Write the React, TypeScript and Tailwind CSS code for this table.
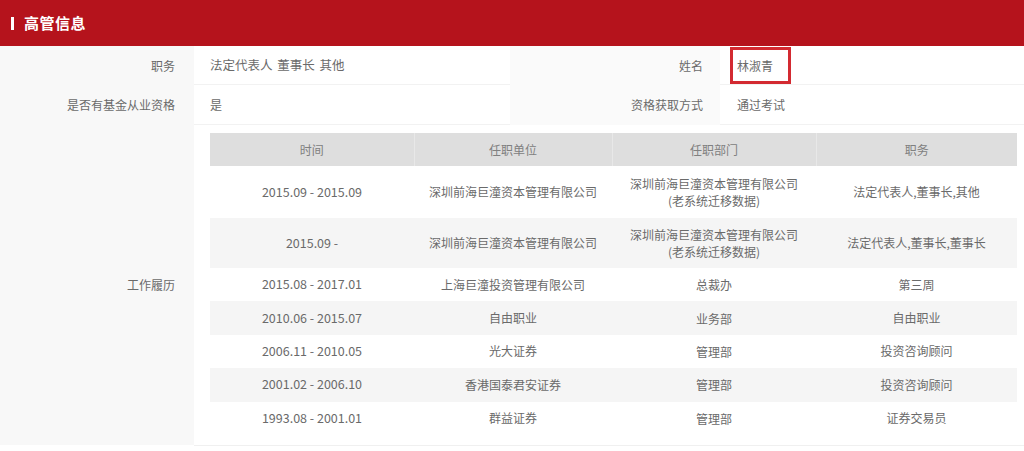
import React from "react";

const jobs = [
  { time: "2015.09 - 2015.09", unit: "深圳前海巨潼资本管理有限公司", dept: ["深圳前海巨潼资本管理有限公司", "(老系统迁移数据)"], title: "法定代表人,董事长,其他" },
  { time: "2015.09 -", unit: "深圳前海巨潼资本管理有限公司", dept: ["深圳前海巨潼资本管理有限公司", "(老系统迁移数据)"], title: "法定代表人,董事长,董事长" },
  { time: "2015.08 - 2017.01", unit: "上海巨潼投资管理有限公司", dept: ["总裁办"], title: "第三周" },
  { time: "2010.06 - 2015.07", unit: "自由职业", dept: ["业务部"], title: "自由职业" },
  { time: "2006.11 - 2010.05", unit: "光大证券", dept: ["管理部"], title: "投资咨询顾问" },
  { time: "2001.02 - 2006.10", unit: "香港国泰君安证券", dept: ["管理部"], title: "投资咨询顾问" },
  { time: "1993.08 - 2001.01", unit: "群益证券", dept: ["管理部"], title: "证券交易员" },
];

export default function App() {
  return (
    <div className="h-[451px] w-[1024px] overflow-hidden bg-white font-['Noto_Sans_CJK_SC','Microsoft_YaHei',sans-serif] text-[12px] text-[#6a6a6a]">
      {/* header bar */}
      <div className="flex h-[46px] items-center bg-[#b5131c] pl-[11px]">
        <span className="mr-[10px] h-[13px] w-[3px] bg-white" />
        <span className="text-[15px] font-bold tracking-[0.5px] text-white">高管信息</span>
      </div>

      <div className="grid grid-cols-[194px_316px_210px_1fr]">
        {/* row 1 */}
        <div className="flex h-[39px] items-center justify-end bg-[#f8f8f8] pr-[19px]">职务</div>
        <div className="flex h-[39px] items-center whitespace-pre border-b border-[#f2f2f2] pl-[16px] text-[12.5px] [word-spacing:2px]">
          法定代表人 董事长 其他
        </div>
        <div className="flex h-[39px] items-center justify-end bg-[#fafafa] pr-[17px]">姓名</div>
        <div className="flex h-[39px] border-b border-[#f2f2f2] pl-[10px]">
          <span className="mt-[1px] flex items-center border-[3px] border-[#d32a31] pl-[4px] pr-[15px]">
            林淑青
          </span>
        </div>

        {/* row 2 */}
        <div className="flex h-[40px] items-center justify-end bg-[#f8f8f8] pr-[19px]">是否有基金从业资格</div>
        <div className="flex h-[40px] items-center border-b border-[#f2f2f2] pl-[16px]">是</div>
        <div className="flex h-[40px] items-center justify-end bg-[#fafafa] pr-[17px]">资格获取方式</div>
        <div className="flex h-[40px] items-center border-b border-[#f2f2f2] pl-[17px]">通过考试</div>

        {/* row 3 */}
        <div className="flex h-[320px] items-center justify-end bg-[#f8f8f8] pr-[19px]">工作履历</div>
        <div className="col-span-3 border-b border-[#f0f0f0] pb-[10px] pl-[16px] pr-[7px] pt-[8px]">
          <table className="w-full table-fixed border-collapse text-center">
            <colgroup>
              <col className="w-[204px]" />
              <col className="w-[198px]" />
              <col className="w-[204px]" />
              <col />
            </colgroup>
            <thead>
              <tr className="h-[33px] bg-[#dedede] text-[#808080]">
                <th className="border-r border-[#e8e8e8] font-normal">时间</th>
                <th className="border-r border-[#e8e8e8] font-normal">任职单位</th>
                <th className="border-r border-[#e8e8e8] font-normal">任职部门</th>
                <th className="font-normal">职务</th>
              </tr>
            </thead>
            <tbody>
              {jobs.map((job, i) => (
                <tr
                  key={i}
                  className={`${i === 0 ? "h-[52px]" : i === 1 ? "h-[50px]" : "h-[33.4px]"} ${
                    i % 2 === 1 ? "bg-[#f5f5f5]" : "bg-white"
                  }`}
                >
                  <td className="text-[12.5px]">{job.time}</td>
                  <td>{job.unit}</td>
                  <td className="leading-[17px]">
                    {job.dept.map((d) => (
                      <div key={d}>{d}</div>
                    ))}
                  </td>
                  <td>{job.title}</td>
                </tr>
              ))}
            </tbody>
          </table>
        </div>
      </div>
    </div>
  );
}
